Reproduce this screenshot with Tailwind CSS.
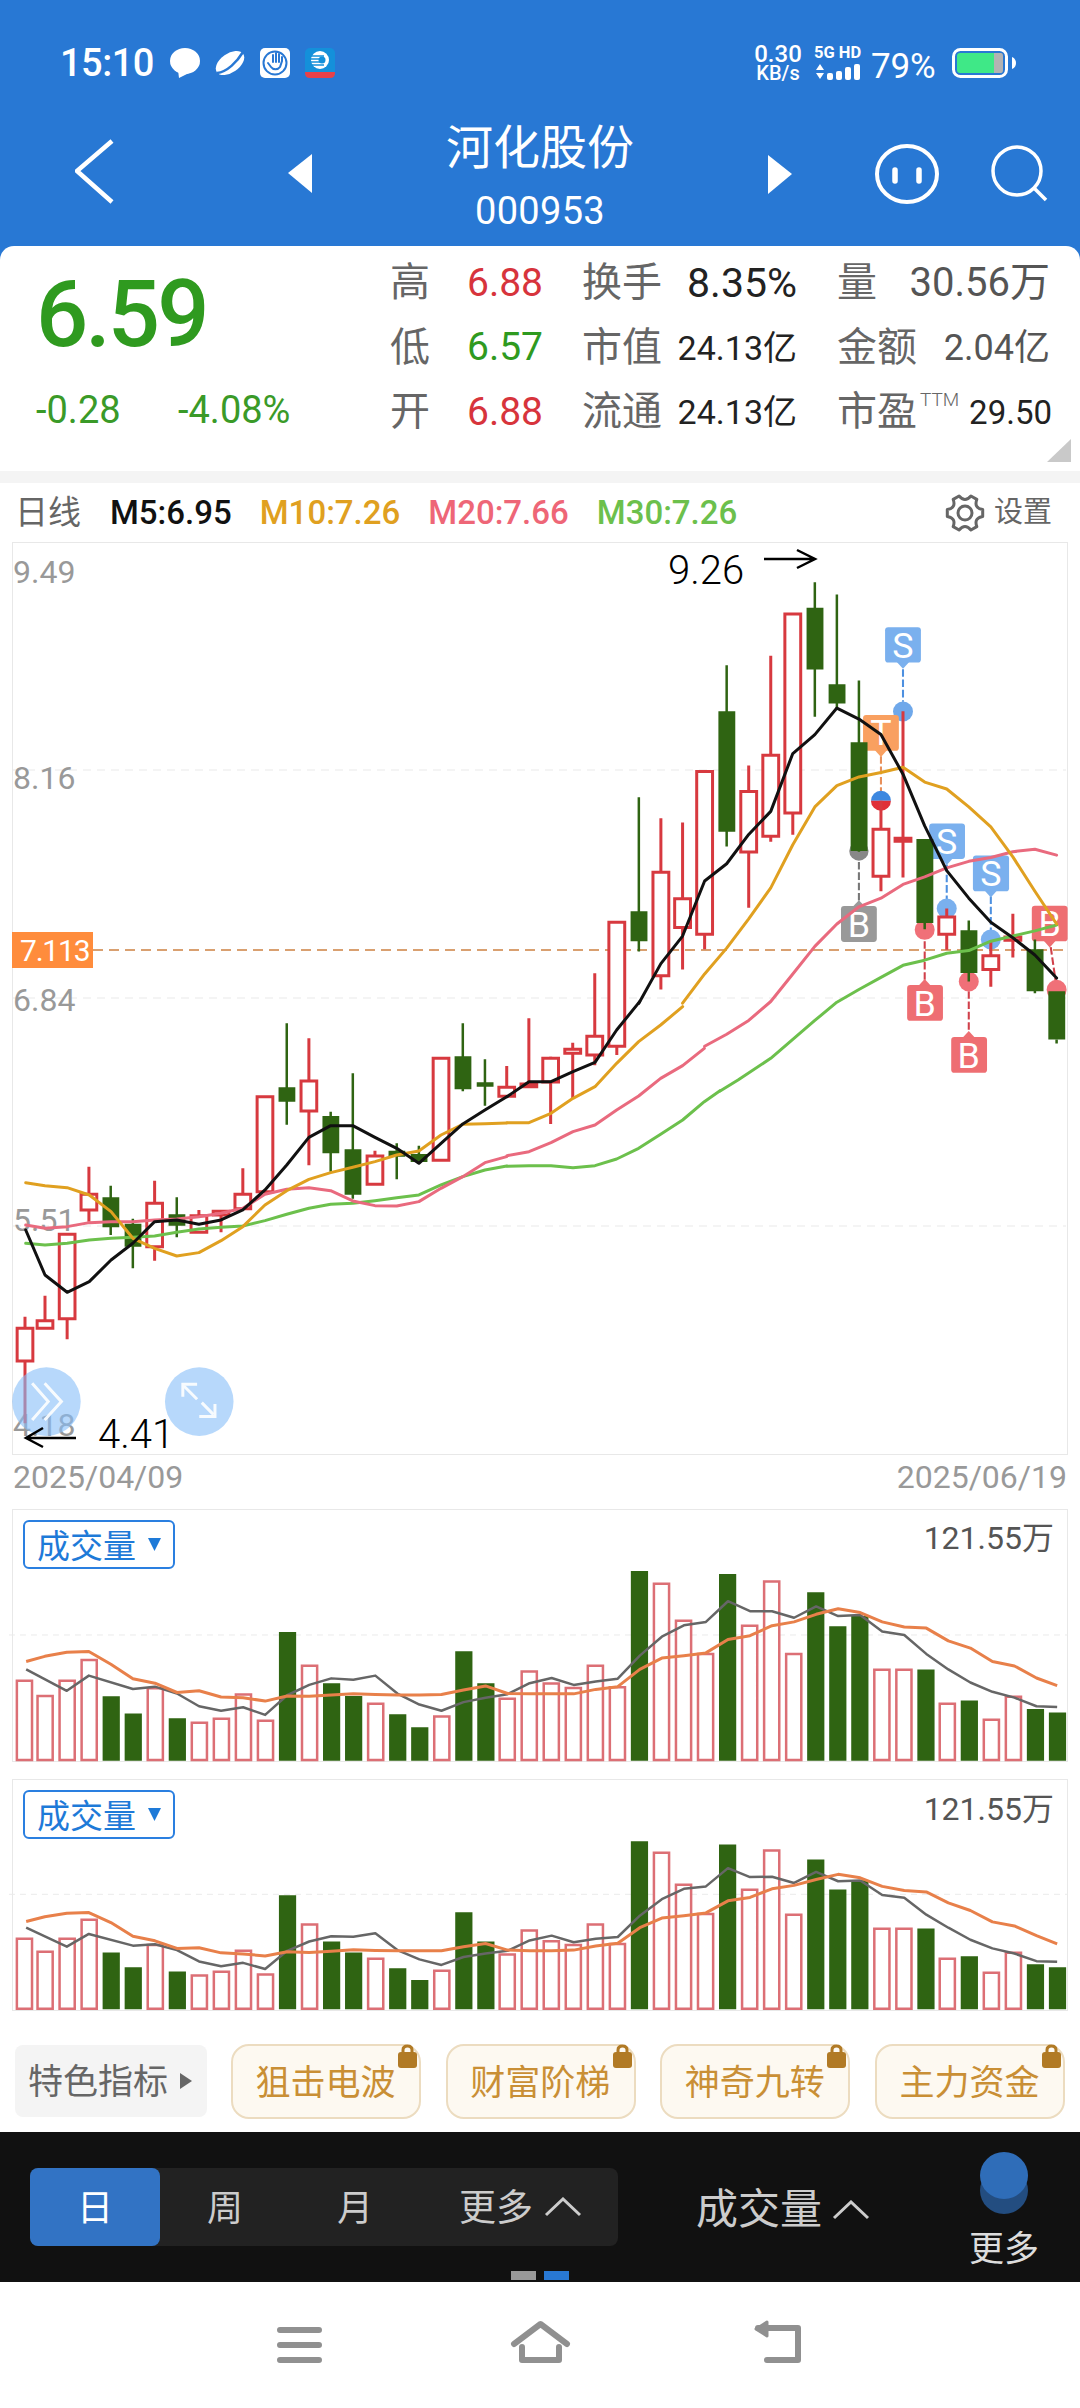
<!DOCTYPE html>
<html lang="zh">
<head>
<meta charset="utf-8">
<title>河化股份</title>
<script src="https://cdn.jsdelivr.net/npm/@tailwindcss/browser@4"></script>
</head>
<body class="relative w-[1080px] h-[2408px] overflow-hidden bg-white font-['Roboto','Noto_Sans_CJK_SC',sans-serif]">

<header class="h-[246px] bg-[#2878d4] text-white flex flex-col">
  <div class="h-[126px] flex items-center justify-between pl-[60px] pr-[64px]">
    <div class="flex items-center">
      <span class="text-[38px] font-medium leading-none tracking-[-0.5px]">15:10</span>
      <svg class="ml-[16px]" width="30" height="30" viewBox="0 0 30 30"><ellipse cx="15" cy="13" rx="15" ry="13" fill="#fff"/><path d="M8 22L9 30L19 25Z" fill="#fff"/></svg>
      <svg class="ml-[15px]" width="30" height="30" viewBox="0 0 30 30"><ellipse cx="15" cy="15" rx="16" ry="9.5" transform="rotate(-35 15 15)" fill="#fff"/><path d="M2 25C12 24 22 14 28 4" fill="none" stroke="#2878d4" stroke-width="2.5"/></svg>
      <svg class="ml-[15px]" width="30" height="30" viewBox="0 0 30 30"><rect width="30" height="30" rx="5" fill="#fff"/><circle cx="15" cy="15" r="11.5" fill="none" stroke="#2878d4" stroke-width="2"/><path d="M8 15L11 19C13 22 18 22 20 19L22 13V9M19 14V6M16 14V5M13 14V7" fill="none" stroke="#2878d4" stroke-width="2" stroke-linecap="round"/></svg>
      <svg class="ml-[15px]" width="30" height="30" viewBox="0 0 30 30"><rect width="30" height="30" rx="5" fill="#1490da"/><path d="M0 24H30V25Q30 30 25 30H5Q0 30 0 25Z" fill="#e8404a"/><circle cx="15" cy="12" r="9" fill="#fff"/><path d="M5 8H19M5 11H18M5 14H18M5 17H19" stroke="#1490da" stroke-width="1.5"/><circle cx="17" cy="12" r="3.5" fill="#1490da"/></svg>
    </div>
    <div class="flex items-center">
      <div class="w-[48px] flex flex-col items-center font-medium">
        <span class="text-[24px] leading-[19px]">0.30</span>
        <span class="text-[20px] leading-[17px] mt-[1px]">KB/s</span>
      </div>
      <div class="ml-[12px] w-[47px] flex flex-col items-start">
        <span class="text-[16.5px] font-bold leading-[16px] whitespace-nowrap">5G&nbsp;HD</span>
        <svg class="mt-[2px]" width="48" height="18" viewBox="0 0 48 18"><path d="M2 7L6 1L10 7ZM2 10H10L6 16Z" fill="#fff"/><rect x="13" y="10" width="6" height="7" rx="2" fill="#fff"/><rect x="22" y="8" width="6" height="9" rx="2" fill="#fff"/><rect x="31" y="4" width="6" height="13" rx="2" fill="#fff"/><rect x="40" y="1" width="6" height="16" rx="2" fill="#fff"/></svg>
      </div>
      <span class="ml-[10px] text-[35px] leading-none w-[66px] whitespace-nowrap tracking-[-0.2px] mt-[6px]">79%</span>
      <svg class="ml-[15px]" width="64" height="30" viewBox="0 0 64 30"><rect x="1.5" y="1.5" width="53" height="27" rx="7" fill="none" stroke="#fff" stroke-width="3"/><path d="M5 8Q5 5 8 5H42V25H8Q5 25 5 22Z" fill="#3fe887"/><path d="M42 5H49Q51 5 51 8V22Q51 25 49 25H42Z" fill="#b3b3b3"/><path d="M60 9C63 10 64 13 64 15C64 17 63 20 60 21Z" fill="#fff"/></svg>
    </div>
  </div>
  <div class="h-[120px] flex">
    <svg class="ml-[75px] shrink-0" width="40" height="120" viewBox="75 126 40 120"><path d="M112 141L77 171L112 202" fill="none" stroke="#fff" stroke-width="4.5"/></svg>
    <svg class="ml-[171px] shrink-0" width="28" height="120" viewBox="286 126 28 120"><path d="M288 173L312 154V193Z" fill="#fff"/></svg>
    <div class="w-[452px] flex flex-col items-center">
      <span class="text-[47px] leading-[47px] -mt-[2px]">河化股份</span>
      <span class="text-[38px] leading-[38px] mt-[21px] tracking-[0.3px]">000953</span>
    </div>
    <svg class="shrink-0" width="28" height="120" viewBox="766 126 28 120"><path d="M768 155L792 174L768 194Z" fill="#fff"/></svg>
    <svg class="ml-[79px] shrink-0" width="68" height="120" viewBox="873 126 68 120"><ellipse cx="907" cy="174" rx="30" ry="28" fill="none" stroke="#fff" stroke-width="4"/><path d="M895 170V181M919 170V181" stroke="#fff" stroke-width="5.5" stroke-linecap="round"/></svg>
    <svg class="ml-[50px] shrink-0" width="60" height="120" viewBox="991 126 60 120"><circle cx="1017" cy="171" r="24" fill="none" stroke="#fff" stroke-width="3.5"/><path d="M1034 188L1046 200" stroke="#fff" stroke-width="3.5"/></svg>
  </div>
</header>

<div class="bg-[#2878d4]">
  <section class="relative h-[225px] rounded-t-[14px] bg-white flex">
    <div class="w-[390px] pl-[36px] pt-[24px] flex flex-col">
      <span class="text-[92px] leading-[90px] font-medium text-[#2f9a1f] tracking-[-3px]">6.59</span>
      <div class="mt-[30px] flex text-[38px] leading-[40px] text-[#3a9a28]">
        <span class="w-[142px]">-0.28</span>
        <span>-4.08%</span>
      </div>
    </div>
    <div class="w-[671px] pt-[5px] grid grid-cols-[77px_115px_215px_40px_213px] auto-rows-[64.5px] items-center text-[#666] text-[40px] leading-none whitespace-nowrap">
      <span>高</span><span class="text-[39px] text-[#d7343c]">6.88</span>
      <div class="flex justify-between items-center"><span>换手</span><span class="text-[41px] text-[#222]">8.35%</span></div><span></span>
      <div class="flex justify-between items-center"><span>量</span><span class="text-[40px] text-[#555]">30.56万</span></div>
      <span>低</span><span class="text-[39px] text-[#2f9a1f]">6.57</span>
      <div class="flex justify-between items-center"><span>市值</span><span class="text-[34px] text-[#222]">24.13亿</span></div><span></span>
      <div class="flex justify-between items-center"><span>金额</span><span class="text-[36px] text-[#555]">2.04亿</span></div>
      <span>开</span><span class="text-[39px] text-[#d7343c]">6.88</span>
      <div class="flex justify-between items-center"><span>流通</span><span class="text-[34px] text-[#222]">24.13亿</span></div><span></span>
      <div class="flex items-center"><span>市盈</span><span class="text-[19px] self-start ml-[3px] -mt-[2px] font-light">TTM</span><span class="text-[33px] text-[#222] ml-auto -mr-[2px]">29.50</span></div>
    </div>
    <svg class="absolute left-[1045px] top-[192px]" width="28" height="26" viewBox="1045 438 28 26"><path d="M1071 439L1047 462H1071Z" fill="#c9c9c9"/></svg>
  </section>
</div>
<div class="h-[12px] bg-[#f4f4f4]"></div>

<div class="h-[59px] flex items-center pl-[15px] pr-[28px] text-[33px] leading-none whitespace-nowrap">
  <span class="text-[#666]">日线</span>
  <div class="ml-[29px] flex gap-[28px] font-medium">
    <span class="text-[#111]">M5:6.95</span>
    <span class="text-[#e0a020]">M10:7.26</span>
    <span class="text-[#ee6677]">M20:7.66</span>
    <span class="text-[#6cc04c]">M30:7.26</span>
  </div>
  <svg class="ml-auto" width="40" height="40" viewBox="-20 -20 40 40"><path d="M17.7 -3.4V3.4Q8.66 5 11.8 13.600L5.900 17Q0 10 -5.900 17L-11.800 13.600Q-8.66 5 -17.700 3.400V-3.400Q-8.66 -5 -11.800 -13.600L-5.900 -17Q0 -10 5.900 -17L11.800 -13.600Q8.66 -5 17.700 -3.400Z" fill="none" stroke="#666" stroke-width="3" stroke-linejoin="round"/><circle r="7" fill="none" stroke="#666" stroke-width="3"/></svg>
  <span class="ml-[9px] text-[29px] text-[#666]">设置</span>
</div>

<div class="relative h-[913px]">
  <div class="ml-[12px] w-[1056px] h-[913px] border border-[#e8e8e8]"></div>
  <svg class="absolute left-0 top-0" width="1080" height="913" viewBox="0 542 1080 913" font-family="Roboto">
    <path d="M13 770H1066M13 998H1066M13 1226H1066" stroke="#e9e9e9" stroke-dasharray="8 6"/>
    <path d="M93 950H1066" stroke="#d9a070" stroke-width="2" stroke-dasharray="10 6"/>
    <g font-size="32" fill="#999">
      <text x="13" y="583">9.49</text>
      <text x="13" y="789">8.16</text>
      <text x="13" y="1011">6.84</text>
      <text x="13" y="1231">5.51</text>
      <text x="13" y="1436">4.18</text>
    </g>

    <g transform="translate(540 540) scale(.3444)">
      <g fill="none" stroke-width="6" stroke-dasharray="22 8">
        <path d="M1054 375V470M1181 942V1045M1309 1035V1135" stroke="#4d90e0"/>
        <path d="M990 628V730" stroke="#e8905a"/>
        <path d="M926 905V1048" stroke="#777"/>
        <path d="M1117 1135V1277M1245 1310V1428M1483 1182L1500 1300" stroke="#d0404a"/>
      </g>
      <circle cx="1054" cy="498" r="29" fill="#6fa8ea"/>
      <circle cx="1181" cy="1070" r="29" fill="#7ab0ee"/>
      <circle cx="1309" cy="1160" r="29" fill="#7ab0ee"/>
      <circle cx="926" cy="903" r="28" fill="#888"/>
      <circle cx="1117" cy="1132" r="29" fill="#f07078"/>
      <circle cx="1245" cy="1282" r="29" fill="#f07078"/>
      <circle cx="1500" cy="1306" r="29" fill="#f07078"/>
      <path d="M961 757A29 29 0 0 1 1019 757Z" fill="#3d88e0"/>
      <path d="M961 757A29 29 0 0 0 1019 757Z" fill="#e03038"/>
      <g font-size="104" fill="#fff" text-anchor="middle">
        <g fill="#7ab0ee"><rect x="1002" y="253" width="104" height="103" rx="9"/><path d="M1036 354H1072L1054 374Z"/><rect x="1130" y="823" width="104" height="103" rx="9"/><path d="M1163 924H1199L1181 944Z"/><rect x="1257" y="916" width="105" height="104" rx="9"/><path d="M1291 1018H1327L1309 1038Z"/></g>
        <g fill="#f9a060"><rect x="938" y="508" width="104" height="104" rx="9"/><path d="M972 610H1008L990 630Z"/></g>
        <g fill="#999"><rect x="874" y="1063" width="104" height="104" rx="9"/><path d="M908 1065H944L926 1046Z"/></g>
        <g fill="#ee6e72"><rect x="1066" y="1292" width="104" height="104" rx="9"/><path d="M1099 1294H1135L1117 1275Z"/><rect x="1194" y="1443" width="104" height="104" rx="9"/><path d="M1227 1445H1263L1245 1426Z"/><rect x="1428" y="1062" width="104" height="103" rx="9"/><path d="M1462 1163H1498L1480 1183Z"/></g>
        <text x="1054" y="342">S</text>
        <text x="1181" y="911">S</text>
        <text x="1309" y="1004">S</text>
        <text x="990" y="596">T</text>
        <text x="926" y="1152">B</text>
        <text x="1117" y="1381">B</text>
        <text x="1245" y="1532">B</text>
        <text x="1480" y="1150">B</text>
      </g>
    </g>

    <!-- candles, left part -->
    <g transform="translate(0 980) scale(.3571 .3333)">
      <path vector-effect="non-scaling-stroke" stroke="#d7393f" stroke-width="3" fill="none" d="M70 1010V1330M126 947V1045M188 763V1078M249 560V725M433 602V842M557 690V757M619 692V757M680 565V688M865 175V556M1050 512V613M1419 258V350M1481 115V321M1542 230V432"/>
      <path vector-effect="non-scaling-stroke" stroke="#d7393f" stroke-width="3" fill="#fff" d="M48 1045H92V1143H48ZM104 1022H148V1045H104ZM166 763H210V1016H166ZM227 643H271V690H227ZM411 670H455V800H411ZM535 707H579V757H535ZM597 694H641V705H597ZM658 643H702V686H658ZM720 350H764V635H720ZM843 303H887V393H843ZM1028 528H1072V613H1028ZM1213 235H1257V541H1213ZM1397 322H1441V349H1397ZM1459 312H1503V320H1459ZM1520 235H1564V306H1520Z"/>
      <path vector-effect="non-scaling-stroke" stroke="#2f6412" stroke-width="2.500" fill="none" d="M310 617V765M372 716V865M495 652V772M803 130V434M926 395V575M988 280V656M1111 490V598M1173 497V552M1296 130V334M1358 238V377"/>
      <path fill="#2f6412" d="M287 652H334V742H287ZM349 731H396V800H349ZM472 703H519V737H472ZM780 322H827V365H780ZM903 408H950V520H903ZM965 508H1012V644H965ZM1088 512H1135V530H1088ZM1150 522H1197V546H1150ZM1273 229H1320V328H1273ZM1335 307H1382V320H1335Z"/>
    </g>
    <!-- candles, right part -->
    <g transform="translate(540 540) scale(.3444)">
      <path vector-effect="non-scaling-stroke" stroke="#d7393f" stroke-width="3" fill="none" d="M95 1460V1620M159 1258V1525M223 1470V1495M351 808V1305M414 820V1247M478 1145V1188M606 655V1068M670 336V876M734 793V856M990 757V1020M1054 497V980M1181 1070V1190M1309 1165V1297M1373 1085V1212"/>
      <path vector-effect="non-scaling-stroke" stroke="#d7393f" stroke-width="3" fill="#fff" d="M72 1479H118V1490H72ZM136 1441H182V1495H136ZM200 1110H246V1470H200ZM328 965H374V1265H328ZM391 1042H437V1125H391ZM455 672H501V1145H455ZM583 730H629V906H583ZM647 625H693V860H647ZM711 215H757V793H711ZM967 840H1013V976H967ZM1031 866H1077V875H1031ZM1158 1095H1204V1145H1158ZM1286 1207H1332V1247H1286ZM1350 1153H1396V1162H1350Z"/>
      <path vector-effect="non-scaling-stroke" stroke="#2f6412" stroke-width="2.500" fill="none" d="M287 747V1195M542 364V890M798 123V513M862 158V490M926 408V905M1117 1112V1130M1245 1105V1282M1437 1160V1316M1500 1450V1462"/>
      <path fill="#2f6412" d="M263 1078H312V1165H263ZM518 497H567V847H518ZM774 197H823V376H774ZM838 419H887V475H838ZM902 587H951V903H902ZM1093 868H1142V1112H1093ZM1221 1133H1270V1257H1221ZM1413 1188H1462V1310H1413ZM1476 1310H1525V1450H1476Z"/>
    </g>

    <!-- moving averages -->
    <g fill="none" stroke-width="3" stroke-linejoin="round" stroke-linecap="round">
      <g transform="translate(0 980) scale(.3571 .3333)">
        <polyline vector-effect="non-scaling-stroke" stroke="#6cc04c" points="72,790 126,795 188,790 250,780 311,775 372,772 433,768 495,757 557,747 619,742 680,738 742,722 803,703 865,685 926,673 988,670 1050,662 1111,653 1173,645 1235,615 1296,590 1358,570 1419,558"/>
        <polyline vector-effect="non-scaling-stroke" stroke="#e96a7e" points="72,735 126,745 188,740 250,728 311,725 372,725 433,720 495,717 557,710 619,700 680,685 742,643 803,628 865,623 926,632 988,663 1050,677 1111,678 1173,665 1235,625 1296,590 1358,548 1419,530"/>
        <polyline vector-effect="non-scaling-stroke" stroke="#e0a020" points="72,608 126,617 188,623 250,645 311,695 372,775 433,805 495,828 557,818 619,782 680,740 742,675 803,632 865,598 926,578 988,562 1050,545 1111,525 1173,513 1235,465 1296,433 1358,431 1419,429"/>
        <polyline vector-effect="non-scaling-stroke" stroke="#111" points="72,750 126,885 188,937 250,905 311,840 372,790 433,725 495,720 557,733 619,720 680,690 742,630 803,555 865,472 926,437 988,437 1050,472 1111,505 1173,550 1235,490 1296,432 1358,390 1419,350"/>
      </g>
      <g transform="translate(480 1000) scale(.3333)">
        <polyline vector-effect="non-scaling-stroke" stroke="#6cc04c" points="81,499 147,497 213,497 279,503 345,497 410,477 476,445 542,403 608,360 673,305 720,272"/>
        <polyline vector-effect="non-scaling-stroke" stroke="#e96a7e" points="81,467 147,455 213,428 279,395 345,375 410,330 476,288 542,235 608,197 673,145"/>
        <polyline vector-effect="non-scaling-stroke" stroke="#e0a020" points="81,368 147,368 213,340 279,295 345,260 410,190 476,125 542,75 608,20"/>
        <polyline vector-effect="non-scaling-stroke" stroke="#111" points="81,290 147,245 213,245 279,215 345,187 410,90 479,5"/>
      </g>
      <g transform="translate(540 540) scale(.3444)">
        <polyline vector-effect="non-scaling-stroke" stroke="#6cc04c" points="523,1600 575,1568 670,1505 734,1450 798,1395 862,1342 926,1305 990,1270 1054,1235 1117,1220 1181,1200 1245,1192 1309,1165 1373,1150 1437,1135 1500,1118"/>
        <polyline vector-effect="non-scaling-stroke" stroke="#e96a7e" points="478,1470 542,1435 606,1395 670,1340 734,1260 798,1180 862,1115 926,1065 990,1040 1054,1000 1117,978 1181,952 1245,933 1309,922 1373,905 1437,898 1500,915"/>
        <polyline vector-effect="non-scaling-stroke" stroke="#e0a020" points="414,1345 478,1260 542,1185 606,1100 670,1010 734,885 798,775 862,713 926,688 990,675 1054,660 1117,703 1181,723 1245,775 1309,833 1373,920 1437,1020 1500,1115"/>
        <polyline vector-effect="non-scaling-stroke" stroke="#111" points="287,1345 351,1230 414,1150 478,990 542,940 606,855 670,788 734,620 798,565 862,488 926,520 990,565 1054,680 1117,830 1181,960 1245,1040 1309,1110 1373,1155 1437,1205 1500,1272"/>
      </g>
    </g>

    <rect x="12" y="932" width="81" height="36" fill="#ff8c3c"/>
    <text x="20" y="961" font-size="30" fill="#fff" letter-spacing="-1.200">7.113</text>

    <!-- round buttons -->
    <g transform="translate(0 980) scale(.3571 .3333)">
      <ellipse cx="130" cy="1265" rx="96" ry="103" fill="#87bef8" opacity=".6"/>
      <ellipse cx="558" cy="1265" rx="96" ry="103" fill="#87bef8" opacity=".6"/>
      <g fill="none" stroke="#fff" stroke-width="3" opacity=".9">
        <polyline vector-effect="non-scaling-stroke" points="90,1210 135,1265 90,1320"/>
        <polyline vector-effect="non-scaling-stroke" points="125,1210 172,1265 125,1320"/>
        <polyline vector-effect="non-scaling-stroke" points="512,1250 512,1213 552,1213"/>
        <polyline vector-effect="non-scaling-stroke" points="558,1310 602,1310 602,1272"/>
        <path vector-effect="non-scaling-stroke" d="M515 1218L552 1258M565 1268L598 1304"/>
      </g>
    </g>

    <!-- hand-written notes -->
    <g fill="#000" font-size="40" font-weight="300">
      <text x="668" y="584">9.26</text>
      <text x="98" y="1448">4.41</text>
    </g>
    <g fill="none" stroke="#000" stroke-width="2.500">
      <path d="M764 559H815M797 550L815 559L797 568"/>
      <path d="M76 1438H26M43 1428L26 1438L43 1447"/>
    </g>
  </svg>
</div>

<div class="h-[44px] mb-[10px] flex items-center justify-between pl-[13px] pr-[13px] text-[32px] leading-none text-[#999]">
  <span>2025/04/09</span>
  <span>2025/06/19</span>
</div>

<div class="relative h-[502px]">
  <div class="relative ml-[12px] w-[1056px] h-[253px] border border-[#e8e8e8]"></div>
  <div class="relative ml-[12px] mt-[17px] w-[1056px] h-[232px] border border-[#e8e8e8]"></div>
  <svg class="absolute left-0 top-0" width="1080" height="502" viewBox="0 1509 1080 502">
    <g transform="translate(0 1480) scale(.6887 .3444)">
      <path vector-effect="non-scaling-stroke" d="M13 450H1550M13 1203H1550" stroke="#eaeaea" stroke-dasharray="6 5" fill="none"/>
      <path fill="#2f6412" d="M149 815V628h25V815zM181 815V678h25V815zM245 815V692h25V815zM405 815V441h25V815zM469 815V590h25V815zM501 815V627h25V815zM565 815V680h25V815zM597 815V718h25V815zM661 815V497h25V815zM693 815V590h25V815zM916 815V264h25V815zM1044 815V273h25V815zM1172 815V326h25V815zM1204 815V425h25V815zM1236 815V395h25V815zM1332 815V550h25V815zM1395 815V640h25V815zM1491 815V665h25V815zM1523 815V675h25V815z"/>
      <path vector-effect="non-scaling-stroke" fill="#fff" stroke="#dc6f75" stroke-width="2.500" d="M24.5 813V583h22V813zM54.5 813V627h22V813zM86.5 813V583h22V813zM118.5 813V523h22V813zM214.5 813V605h22V813zM278.5 813V705h22V813zM310.5 813V693h22V813zM342.5 813V623h22V813zM374.5 813V699h22V813zM438.5 813V539h22V813zM534.5 813V650h22V813zM630.5 813V687h22V813zM725.5 813V635h22V813zM757.5 813V556h22V813zM789.5 813V591h22V813zM821.5 813V604h22V813zM853.5 813V539h22V813zM885.5 813V602h22V813zM949.5 813V301h22V813zM981.5 813V409h22V813zM1013.5 813V505h22V813zM1077.5 813V423h22V813zM1109.5 813V295h22V813zM1141.5 813V505h22V813zM1269.5 813V551h22V813zM1301.5 813V551h22V813zM1364.5 813V650h22V813zM1428.5 813V696h22V813zM1460.5 813V629h22V813z"/>
      <path fill="#2f6412" d="M149 1537V1372h25V1537zM181 1537V1415h25V1537zM245 1537V1427h25V1537zM405 1537V1206h25V1537zM469 1537V1340h25V1537zM501 1537V1372h25V1537zM565 1537V1418h25V1537zM597 1537V1452h25V1537zM661 1537V1255h25V1537zM693 1537V1340h25V1537zM916 1537V1049h25V1537zM1044 1537V1058h25V1537zM1172 1537V1102h25V1537zM1204 1537V1189h25V1537zM1236 1537V1162h25V1537zM1332 1537V1302h25V1537zM1395 1537V1383h25V1537zM1491 1537V1406h25V1537zM1523 1537V1415h25V1537z"/>
      <path vector-effect="non-scaling-stroke" fill="#fff" stroke="#dc6f75" stroke-width="2.500" d="M24.5 1535V1332h22V1535zM54.5 1535V1370h22V1535zM86.5 1535V1332h22V1535zM118.5 1535V1277h22V1535zM214.5 1535V1350h22V1535zM278.5 1535V1439h22V1535zM310.5 1535V1428h22V1535zM342.5 1535V1367h22V1535zM374.5 1535V1436h22V1535zM438.5 1535V1291h22V1535zM534.5 1535V1390h22V1535zM630.5 1535V1425h22V1535zM725.5 1535V1378h22V1535zM757.5 1535V1308h22V1535zM789.5 1535V1339h22V1535zM821.5 1535V1350h22V1535zM853.5 1535V1291h22V1535zM885.5 1535V1347h22V1535zM949.5 1535V1082h22V1535zM981.5 1535V1175h22V1535zM1013.5 1535V1260h22V1535zM1077.5 1535V1190h22V1535zM1109.5 1535V1076h22V1535zM1141.5 1535V1262h22V1535zM1269.5 1535V1303h22V1535zM1301.5 1535V1303h22V1535zM1364.5 1535V1390h22V1535zM1428.5 1535V1431h22V1535zM1460.5 1535V1373h22V1535z"/>
      <g fill="none" stroke-width="2.500" stroke-linejoin="round">
        <polyline vector-effect="non-scaling-stroke" stroke="#666" points="38,550 97,612 129,568 193,607 225,600 257,620 289,657 321,670 353,660 385,682 417,625 449,595 481,576 513,580 545,568 577,620 609,652 641,670 673,645 705,632 737,622 769,590 801,575 833,595 865,585 897,577 929,510 961,455 993,422 1025,412 1057,352 1089,381 1121,381 1153,400 1185,367 1217,395 1249,392 1281,440 1313,450 1345,505 1377,550 1409,588 1441,615 1473,632 1505,657 1535,659"/>
        <polyline vector-effect="non-scaling-stroke" stroke="#e8804a" stroke-width="3" points="38,527 65,512 97,500 129,498 161,535 193,577 225,590 257,617 289,612 321,630 353,632 385,642 417,627 449,628 481,624 513,621 545,623 577,624 609,624 641,623 673,610 705,598 737,620 769,621 801,621 833,621 865,608 897,600 929,550 961,517 993,510 1025,502 1057,463 1089,452 1121,423 1153,412 1185,390 1217,374 1249,385 1281,412 1313,427 1345,430 1377,467 1409,488 1441,527 1473,540 1505,575 1535,597"/>
        <polyline vector-effect="non-scaling-stroke" stroke="#666" points="38,1300 97,1355 129,1318 193,1352 225,1348 257,1365 289,1398 321,1412 353,1402 385,1420 417,1367 449,1340 481,1325 513,1326 545,1316 577,1365 609,1392 641,1408 673,1385 705,1375 737,1367 769,1337 801,1323 833,1342 865,1332 897,1327 929,1265 961,1217 993,1187 1025,1180 1057,1127 1089,1153 1121,1152 1153,1170 1185,1138 1217,1165 1249,1163 1281,1205 1313,1213 1345,1262 1377,1300 1409,1335 1441,1360 1473,1375 1505,1397 1535,1399"/>
        <polyline vector-effect="non-scaling-stroke" stroke="#e8804a" stroke-width="3" points="38,1282 65,1268 97,1258 129,1256 161,1285 193,1325 225,1338 257,1360 289,1358 321,1373 353,1376 385,1382 417,1370 449,1372 481,1368 513,1364 545,1366 577,1367 609,1367 641,1367 673,1355 705,1346 737,1365 769,1367 801,1367 833,1365 865,1353 897,1345 929,1300 961,1272 993,1265 1025,1257 1057,1222 1089,1212 1121,1187 1153,1177 1185,1160 1217,1145 1249,1155 1281,1180 1313,1192 1345,1196 1377,1228 1409,1250 1441,1283 1473,1295 1505,1323 1535,1347"/>
      </g>
    </g>
  </svg>
  <!-- panel labels -->
  <div class="absolute left-[23px] top-[11px] w-[152px] h-[49px] rounded-[6px] border-2 border-[#2a7fe0] bg-white flex items-center pl-[12px] pt-[3px] text-[33px] leading-none text-[#1e7ad8]">成交量<svg class="ml-[12px] -mt-[3px]" width="13" height="13" viewBox="0 0 13 13"><path d="M0 0H13L6.500 13Z" fill="#1e7ad8"/></svg></div>
  <span class="absolute right-[26px] top-[13px] text-[32px] leading-none text-[#555]">121.55万</span>
  <div class="absolute left-[23px] top-[281px] w-[152px] h-[49px] rounded-[6px] border-2 border-[#2a7fe0] bg-white flex items-center pl-[12px] pt-[3px] text-[33px] leading-none text-[#1e7ad8]">成交量<svg class="ml-[12px] -mt-[3px]" width="13" height="13" viewBox="0 0 13 13"><path d="M0 0H13L6.500 13Z" fill="#1e7ad8"/></svg></div>
  <span class="absolute right-[26px] top-[284px] text-[32px] leading-none text-[#555]">121.55万</span>
</div>

<div class="h-[121px] pt-[33px] pl-[15px] flex items-start">
  <div class="w-[192px] h-[72px] mt-[1px] rounded-[8px] bg-[#f4f4f4] flex items-center pl-[13px] pt-[3px] text-[35px] leading-none text-[#666] whitespace-nowrap">特色指标<svg class="ml-[12px] -mt-[3px]" width="12" height="16" viewBox="0 0 12 16"><path d="M0 0L12 8L0 16Z" fill="#666"/></svg></div>
  <div class="ml-[24px] flex gap-[24.700px]">
    <div class="relative w-[190px] h-[75px] rounded-[18px] border-2 border-[#ecdcc0] bg-[#fdf9f1] flex items-center justify-center pt-[3px] pr-[1px] text-[35px] leading-none text-[#c98f35]">狙击电波<svg class="absolute right-0 -top-[2px]" width="22" height="24" viewBox="0 0 22 24"><path d="M6 10V6Q6 2 10.500 2Q15 2 15 6V10" fill="none" stroke="#b17a25" stroke-width="3"/><rect x="1" y="8" width="19" height="16" rx="3" fill="#b17a25"/></svg></div>
    <div class="relative w-[190px] h-[75px] rounded-[18px] border-2 border-[#ecdcc0] bg-[#fdf9f1] flex items-center justify-center pt-[3px] pr-[1px] text-[35px] leading-none text-[#c98f35]">财富阶梯<svg class="absolute right-0 -top-[2px]" width="22" height="24" viewBox="0 0 22 24"><path d="M6 10V6Q6 2 10.500 2Q15 2 15 6V10" fill="none" stroke="#b17a25" stroke-width="3"/><rect x="1" y="8" width="19" height="16" rx="3" fill="#b17a25"/></svg></div>
    <div class="relative w-[190px] h-[75px] rounded-[18px] border-2 border-[#ecdcc0] bg-[#fdf9f1] flex items-center justify-center pt-[3px] pr-[1px] text-[35px] leading-none text-[#c98f35]">神奇九转<svg class="absolute right-0 -top-[2px]" width="22" height="24" viewBox="0 0 22 24"><path d="M6 10V6Q6 2 10.500 2Q15 2 15 6V10" fill="none" stroke="#b17a25" stroke-width="3"/><rect x="1" y="8" width="19" height="16" rx="3" fill="#b17a25"/></svg></div>
    <div class="relative w-[190px] h-[75px] rounded-[18px] border-2 border-[#ecdcc0] bg-[#fdf9f1] flex items-center justify-center pt-[3px] pr-[1px] text-[35px] leading-none text-[#c98f35]">主力资金<svg class="absolute right-0 -top-[2px]" width="22" height="24" viewBox="0 0 22 24"><path d="M6 10V6Q6 2 10.500 2Q15 2 15 6V10" fill="none" stroke="#b17a25" stroke-width="3"/><rect x="1" y="8" width="19" height="16" rx="3" fill="#b17a25"/></svg></div>
  </div>
</div>

<div class="relative h-[150px] bg-[#111] flex items-start whitespace-nowrap">
  <div class="ml-[30px] mt-[36px] w-[588px] h-[78px] rounded-[8px] bg-[#222] flex items-center text-[36px] leading-none text-[#ccc]">
    <span class="w-[130px] h-[78px] rounded-[8px] bg-[#3273c4] text-white flex items-center justify-center pt-[3px]">日</span>
    <span class="w-[130px] text-center pt-[3px]">周</span>
    <span class="w-[130px] text-center pt-[3px]">月</span>
    <span class="pl-[39px] flex items-center"><span class="pt-[3px] text-[37px]">更多</span><svg class="ml-[11px]" width="38" height="20" viewBox="0 0 38 20"><path d="M2 18L19 2L36 18" fill="none" stroke="#ccc" stroke-width="3"/></svg></span>
  </div>
  <div class="ml-[78px] mt-[57px] flex items-center text-[42px] leading-none text-[#ccc]">成交量<svg class="ml-[10px]" width="38" height="20" viewBox="0 0 38 20"><path d="M2 18L19 2L36 18" fill="none" stroke="#ccc" stroke-width="3"/></svg></div>
  <div class="ml-auto mr-[41px] pt-[20px] flex flex-col items-center text-[35px] leading-[36px] text-[#ddd]">
    <svg width="48" height="62" viewBox="0 0 48 62"><ellipse cx="24" cy="38.500" rx="24" ry="23.500" fill="#234d80"/><ellipse cx="24" cy="23.500" rx="24" ry="23.500" fill="#2f6db8"/></svg>
    <span class="mt-[18px]">更多</span>
  </div>
  <div class="absolute left-[511px] top-[139px] flex gap-[8px]">
    <span class="w-[25px] h-[9px] bg-[#999]"></span>
    <span class="w-[25px] h-[9px] bg-[#2878d4]"></span>
  </div>
</div>

<nav class="h-[126px] flex bg-white">
  <svg class="ml-[272px] shrink-0" width="56" height="126" viewBox="272 2282 56 126"><path d="M280 2330H319M280 2345H319M280 2360H319" stroke="#909090" stroke-width="6" stroke-linecap="round"/></svg>
  <svg class="ml-[177px] shrink-0" width="70" height="126" viewBox="505 2282 70 126"><path d="M514 2344L540.500 2324L567 2344M522 2347V2360H559V2347" fill="none" stroke="#909090" stroke-width="6" stroke-linecap="round" stroke-linejoin="round"/></svg>
  <svg class="ml-[175px] shrink-0" width="60" height="126" viewBox="752 2282 60 126"><path d="M769 2360H800V2328H760" fill="none" stroke="#909090" stroke-width="6" stroke-linejoin="round" stroke-linecap="round"/><path d="M769 2322L758 2329L769 2336Z" fill="#909090" stroke="#909090" stroke-width="3" stroke-linejoin="round"/></svg>
</nav>
</body>
</html>
